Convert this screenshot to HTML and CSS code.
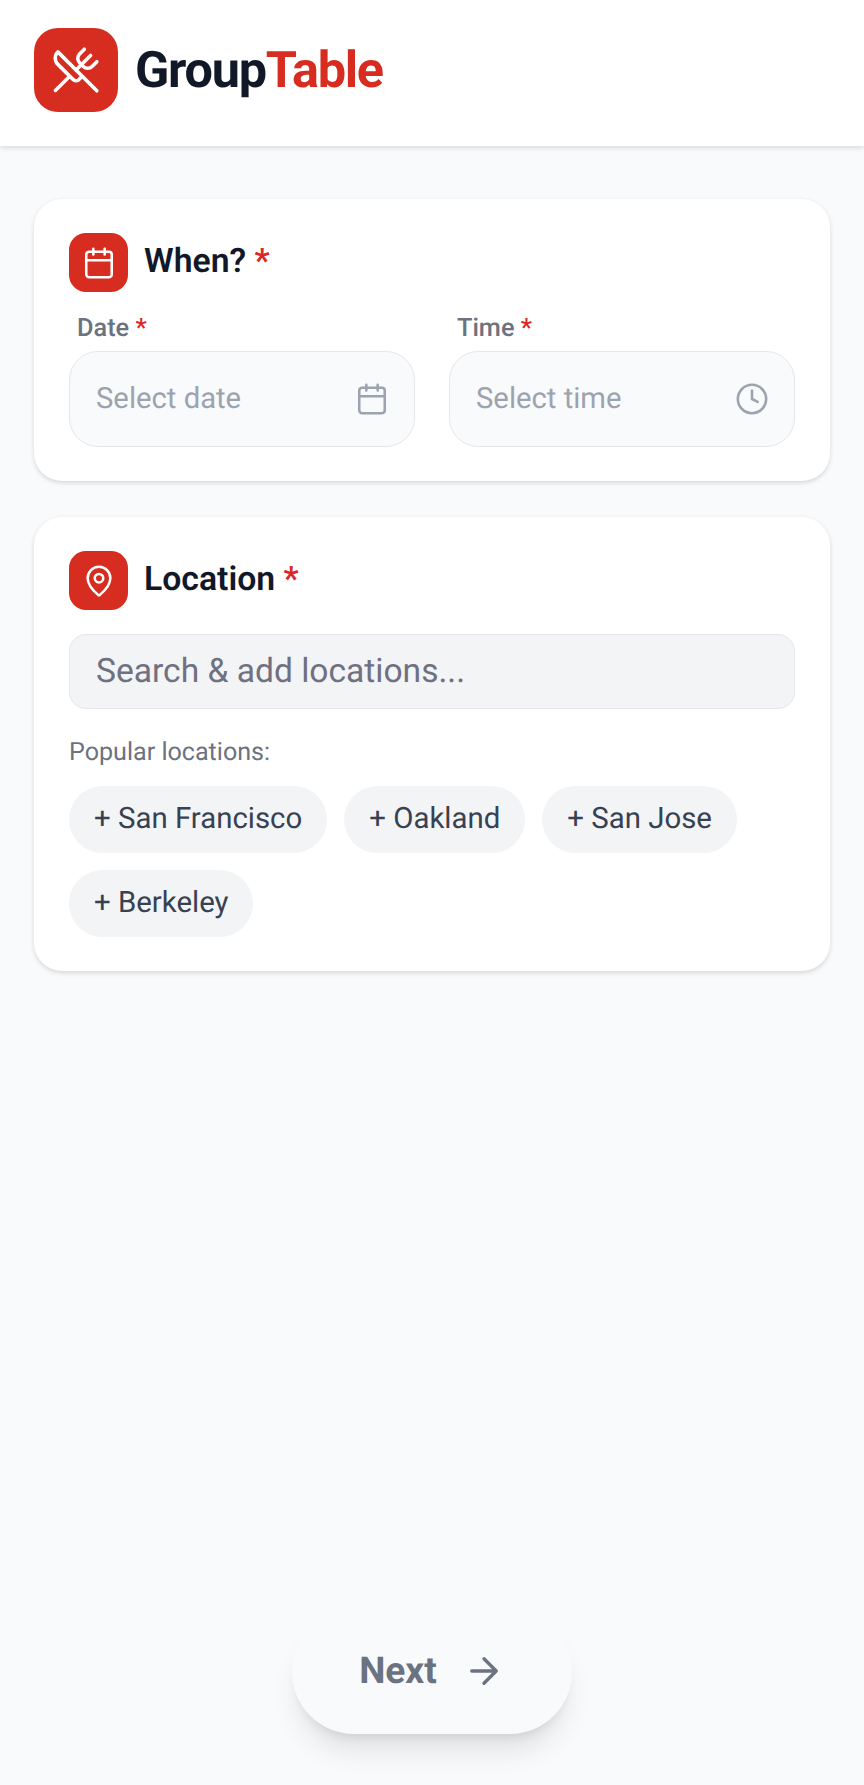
FILE: index.html
```html
<!DOCTYPE html>
<html lang="en">
<head>
<meta charset="utf-8">
<title>GroupTable</title>
<link rel="stylesheet" href="styles.css">
</head>
<body>
<div class="page">
  <header class="header">
    <div class="logo">
      <svg width="50" height="50" viewBox="0 0 24 24" fill="none" stroke="#fff" stroke-width="1.700" stroke-linecap="round" stroke-linejoin="round">
        <path d="m16 2-2.300 2.300a3 3 0 0 0 0 4.200l1.800 1.800a3 3 0 0 0 4.200 0L22 8"/>
        <path d="M15 15 3.300 3.300a4.200 4.200 0 0 0 0 6l7.300 7.300c.7.7 2 .7 2.800 0L15 15Zm0 0 7 7"/>
        <path d="m2.100 21.800 6.400-6.300"/>
        <path d="m19 5-7 7"/>
      </svg>
    </div>
    <div class="brand"><span class="brand-dark">Group</span><span class="brand-red">Table</span></div>
  </header>
  <main class="main">
    <section class="card">
      <div class="card-head">
        <div class="badge">
          <svg width="34" height="34" viewBox="0 0 24 24" fill="none" stroke="#fff" stroke-width="1.800" stroke-linecap="round" stroke-linejoin="round"><rect x="3" y="4" width="18" height="18" rx="2"/><path d="M8 2v4M16 2v4M3 10h18"/></svg>
        </div>
        <h2 class="card-title">When? <span class="req">*</span></h2>
      </div>
      <div class="fields">
        <div class="field">
          <div class="field-label">Date <span class="req">*</span></div>
          <div class="picker">
            <span>Select date</span>
            <svg width="34" height="34" viewBox="0 0 24 24" fill="none" stroke="#9ca3af" stroke-width="1.800" stroke-linecap="round" stroke-linejoin="round"><rect x="3" y="4" width="18" height="18" rx="2"/><path d="M8 2v4M16 2v4M3 10h18"/></svg>
          </div>
        </div>
        <div class="field">
          <div class="field-label">Time <span class="req">*</span></div>
          <div class="picker">
            <span>Select time</span>
            <svg width="34" height="34" viewBox="0 0 24 24" fill="none" stroke="#9ca3af" stroke-width="1.800" stroke-linecap="round" stroke-linejoin="round"><circle cx="12" cy="12" r="10"/><path d="M12 6v6l4 2"/></svg>
          </div>
        </div>
      </div>
    </section>
    <section class="card">
      <div class="card-head card-head-loc">
        <div class="badge">
          <svg width="34" height="34" viewBox="0 0 24 24" fill="none" stroke="#fff" stroke-width="1.800" stroke-linecap="round" stroke-linejoin="round"><path d="M20 10c0 4.993-5.539 10.193-7.399 11.799a1 1 0 0 1-1.202 0C9.539 20.193 4 14.993 4 10a8 8 0 0 1 16 0"/><circle cx="12" cy="10" r="3"/></svg>
        </div>
        <h2 class="card-title">Location <span class="req">*</span></h2>
      </div>
      <div class="search">Search &amp; add locations...</div>
      <div class="popular">Popular locations:</div>
      <div class="chips">
        <div class="chip">+ San Francisco</div>
        <div class="chip">+ Oakland</div>
        <div class="chip">+ San Jose</div>
        <div class="chip">+ Berkeley</div>
      </div>
    </section>
  </main>
  <footer class="footer">
    <div class="next">
      <span>Next</span>
      <svg width="42" height="42" viewBox="0 0 24 24" fill="none" stroke="#6b7280" stroke-width="1.900" stroke-linecap="round" stroke-linejoin="round"><path d="M5 12h14M12 5l7 7-7 7"/></svg>
    </div>
  </footer>
</div>
</body>
</html>
```
FILE: styles.css
```css
* { box-sizing: border-box; }
html, body { margin: 0; padding: 0; }
body {
  font-family: Roboto, "Liberation Sans", sans-serif;
  background: #f9fafb;
  color: #111827;
  text-rendering: geometricPrecision;
}
.page {
  height: 1785px;
  display: flex;
  flex-direction: column;
  overflow: hidden;
}
.header {
  height: 146px;
  background: #fff;
  display: flex;
  align-items: center;
  gap: 17px;
  padding: 0 34px 6px;
  box-shadow: 0 2px 5px rgba(0, 0, 0, 0.13);
}
.logo {
  width: 84px;
  height: 84px;
  background: #d62d20;
  border-radius: 24px;
  display: flex;
  align-items: center;
  justify-content: center;
}
.brand {
  font-size: 50.400px;
  font-weight: 700;
  letter-spacing: -1.270px;
}
.brand-dark { color: #111827; }
.brand-red { color: #d62d20; }
.main {
  flex: 1;
  padding: 53px 34px 0;
  display: flex;
  flex-direction: column;
  gap: 36px;
}
.card {
  background: #fff;
  border-radius: 28px;
  padding: 34px 35px;
  box-shadow: 0 2px 5px rgba(0, 0, 0, 0.14);
}
.card-head {
  display: flex;
  align-items: center;
  gap: 16px;
  margin-bottom: 20px;
}
.card-head-loc { margin-bottom: 24px; }
.badge {
  width: 59px;
  height: 59px;
  border-radius: 17px;
  background: #d62d20;
  display: flex;
  align-items: center;
  justify-content: center;
  flex: none;
}
.card-title {
  margin: 0;
  font-size: 33.750px;
  font-weight: 600;
  line-height: 1.200;
  color: #111827;
}
.req { color: #dc2626; }
.fields {
  display: flex;
  gap: 34px;
}
.field { flex: 1; }
.field-label {
  font-size: 25.300px;
  font-weight: 500;
  color: #6b7280;
  padding-left: 8px;
  margin-bottom: 5px;
  line-height: 34px;
}
.picker {
  height: 96px;
  border: 1.500px solid #e5e7eb;
  border-radius: 29px;
  background: #f9fafb;
  display: flex;
  align-items: center;
  justify-content: space-between;
  padding: 0 25px 0 26px;
  font-size: 29.250px;
  color: #9ca3af;
}
.search {
  height: 75px;
  background: #f3f4f6;
  border: 1.500px solid #e5e7eb;
  border-radius: 17px;
  padding: 0 26px;
  display: flex;
  align-items: center;
  font-size: 33.600px;
  color: #6f7080;
}
.popular {
  font-size: 25.100px;
  color: #6b7280;
  margin-top: 29px;
  line-height: 30px;
}
.chips {
  display: flex;
  flex-wrap: wrap;
  gap: 17px;
  margin-top: 18px;
}
.chip {
  height: 67px;
  border-radius: 34px;
  background: #f3f4f6;
  padding: 0 25px 1px;
  display: flex;
  align-items: center;
  font-size: 29.400px;
  color: #374151;
}
.footer {
  display: flex;
  justify-content: center;
  padding-bottom: 51px;
}
.next {
  width: 280px;
  height: 124px;
  border-radius: 62px;
  background: #f9fafb;
  display: flex;
  align-items: center;
  justify-content: center;
  gap: 26px;
  font-size: 37.100px;
  font-weight: 700;
  color: #6b7280;
  padding-bottom: 2px;
  box-shadow: 0 22px 28px -6px rgba(0, 0, 0, 0.1), 0 9px 11px -7px rgba(0, 0, 0, 0.1);
}
```
